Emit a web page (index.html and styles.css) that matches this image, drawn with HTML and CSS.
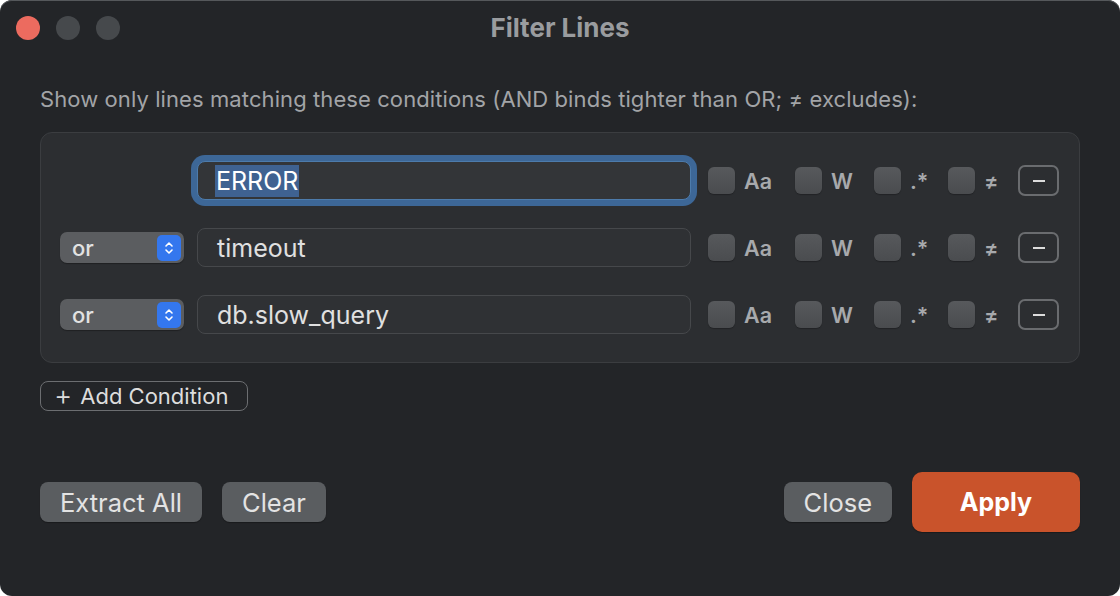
FILE: index.html
```html
<!DOCTYPE html>
<html>
<head>
<meta charset="utf-8">
<link rel="stylesheet" href="styles.css">
</head>
<body>
<div class="window">
  <div class="titlebar">
    <div class="lights">
      <span class="light red"></span>
      <span class="light grey"></span>
      <span class="light grey"></span>
    </div>
    <div class="title">Filter Lines</div>
  </div>
  <div class="content">
    <p class="desc">Show only lines matching these conditions (AND binds tighter than OR; ≠ excludes):</p>
    <div class="panel">
      <div class="row">
        <div class="op-spacer"></div>
        <div class="field focused"><span class="sel">ERROR</span></div>
        <div class="opt opt-aa"><span class="cb"></span><span class="lbl">Aa</span></div>
        <div class="opt opt-w"><span class="cb"></span><span class="lbl">W</span></div>
        <div class="opt opt-re"><span class="cb"></span><span class="lbl">.*</span></div>
        <div class="opt opt-ne"><span class="cb"></span><span class="lbl">≠</span></div>
        <div class="minus"><span class="dash"></span></div>
      </div>
      <div class="row">
        <div class="popup"><span class="popup-text">or</span><span class="stepper"><svg width="10" height="16" viewBox="0 0 10 16"><path d="M2 6 L5 3 L8 6 M2 10 L5 13 L8 10" fill="none" stroke="#fff" stroke-width="1.6" stroke-linecap="round" stroke-linejoin="round"/></svg></span></div>
        <div class="field">timeout</div>
        <div class="opt opt-aa"><span class="cb"></span><span class="lbl">Aa</span></div>
        <div class="opt opt-w"><span class="cb"></span><span class="lbl">W</span></div>
        <div class="opt opt-re"><span class="cb"></span><span class="lbl">.*</span></div>
        <div class="opt opt-ne"><span class="cb"></span><span class="lbl">≠</span></div>
        <div class="minus"><span class="dash"></span></div>
      </div>
      <div class="row">
        <div class="popup"><span class="popup-text">or</span><span class="stepper"><svg width="10" height="16" viewBox="0 0 10 16"><path d="M2 6 L5 3 L8 6 M2 10 L5 13 L8 10" fill="none" stroke="#fff" stroke-width="1.6" stroke-linecap="round" stroke-linejoin="round"/></svg></span></div>
        <div class="field">db.slow_query</div>
        <div class="opt opt-aa"><span class="cb"></span><span class="lbl">Aa</span></div>
        <div class="opt opt-w"><span class="cb"></span><span class="lbl">W</span></div>
        <div class="opt opt-re"><span class="cb"></span><span class="lbl">.*</span></div>
        <div class="opt opt-ne"><span class="cb"></span><span class="lbl">≠</span></div>
        <div class="minus"><span class="dash"></span></div>
      </div>
    </div>
    <div class="add-row">
      <div class="add-btn"><span class="plus">+</span><span>Add Condition</span></div>
    </div>
    <div class="actions">
      <div class="group">
        <div class="btn">Extract All</div>
        <div class="btn">Clear</div>
      </div>
      <div class="group">
        <div class="btn">Close</div>
        <div class="btn primary">Apply</div>
      </div>
    </div>
  </div>
</div>
</body>
</html>
```

FILE: styles.css
```css
* { box-sizing: border-box; }
html, body { margin: 0; padding: 0; background: #ffffff; }
body { font-family: Inter, "Noto Sans", sans-serif; }

.window {
  width: 1120px;
  height: 596px;
  background: #232528;
  border-radius: 12px;
  box-shadow: inset 0 1px 0 #55585b;
  overflow: hidden;
}

.titlebar {
  height: 56px;
  position: relative;
  display: flex;
  align-items: center;
  justify-content: center;
}
.lights {
  position: absolute;
  left: 16px;
  top: 16px;
  display: flex;
  gap: 16px;
}
.light { width: 24px; height: 24px; border-radius: 50%; display: block; }
.light.red { background: #ec6b5f; }
.light.grey { background: #46494c; }
.title {
  color: #9a9c9f;
  font-weight: 700;
  font-size: 26px;
  line-height: 30px;
}

.content { padding: 0 40px; }
.desc {
  margin: 30px 0 0 0;
  color: #a2a4a7;
  font-size: 22px;
  line-height: 26px;
  letter-spacing: 0.09px;
}

.panel {
  margin-top: 20px;
  background: #2c2e31;
  border: 1px solid #3b3d40;
  border-radius: 12px;
  padding: 14px 19px 14px 19px;
  height: 231px;
}
.row {
  height: 67px;
  display: flex;
  align-items: center;
}
.op-spacer { width: 124px; flex: none; }
.popup {
  width: 124px;
  height: 31px;
  flex: none;
  background: #5b5d60;
  border-radius: 7px;
  display: flex;
  align-items: center;
  justify-content: space-between;
  padding: 0 3px 0 12px;
  box-shadow: 0 1px 1px rgba(0,0,0,0.3);
}
.popup-text { color: #e2e2e2; font-size: 22px; font-weight: 500; }
.stepper {
  width: 24px;
  height: 26px;
  background: #3477ee;
  border-radius: 5px;
  display: flex;
  align-items: center;
  justify-content: center;
}
.field {
  margin-left: 13px;
  width: 494px;
  height: 39px;
  flex: none;
  background: #2f3134;
  border: 1px solid #46484b;
  border-radius: 8px;
  color: #e0e0e0;
  font-size: 25px;
  display: flex;
  align-items: center;
  padding-left: 19px;
}
.field.focused {
  background: #333538;
  border: 1px solid #4d7bab;
  box-shadow: 0 0 0 6px #3d6797;
  border-radius: 8px;
  padding-left: 17px;
}
.sel {
  background: #3f6291;
  color: #ffffff;
  line-height: 32px;
  padding: 0 1px;
}
.opt {
  display: flex;
  align-items: center;
  flex: none;
}
.opt-aa { margin-left: 17px; width: 87px; }
.opt-w { width: 79px; }
.opt-re { width: 74px; }
.opt-ne { width: 70px; }
.cb {
  width: 27px;
  height: 27px;
  border-radius: 6px;
  background: linear-gradient(#57595c, #4a4c4f);
  display: block;
  flex: none;
  box-shadow: 0 1px 1px rgba(0,0,0,0.25);
}
.lbl {
  margin-left: 9px;
  color: #a7a9ac;
  font-size: 21.5px;
  font-weight: 600;
}
.minus {
  width: 41px;
  height: 31px;
  flex: none;
  border: 2px solid #6a6c6f;
  border-radius: 7px;
  display: flex;
  align-items: center;
  justify-content: center;
}
.dash { width: 12px; height: 2px; background: #dcdcdc; display: block; }

.add-row { margin-top: 18px; display: flex; }
.add-btn {
  height: 30px;
  width: 208px;
  border: 1.5px solid #6c6e71;
  border-radius: 8px;
  display: flex;
  align-items: center;
  padding-left: 13px;
  color: #dddddd;
  font-size: 22px;
}
.plus { font-size: 28px; font-weight: 300; margin-right: 8px; line-height: 1; margin-top: -3px; }

.actions {
  margin-top: 61px;
  display: flex;
  justify-content: space-between;
  align-items: center;
}
.group { display: flex; align-items: center; gap: 20px; }
.btn {
  height: 40px;
  padding: 0 20px;
  background: #5a5d60;
  border-radius: 8px;
  color: #e3e3e3;
  font-size: 25.5px;
  display: flex;
  align-items: center;
  justify-content: center;
  box-shadow: 0 1px 1px rgba(0,0,0,0.3);
}
.btn.primary {
  width: 168px;
  height: 60px;
  background: #c9532b;
  border-radius: 10px;
  color: #ffffff;
  font-weight: 700;
  font-size: 25px;
}
```
